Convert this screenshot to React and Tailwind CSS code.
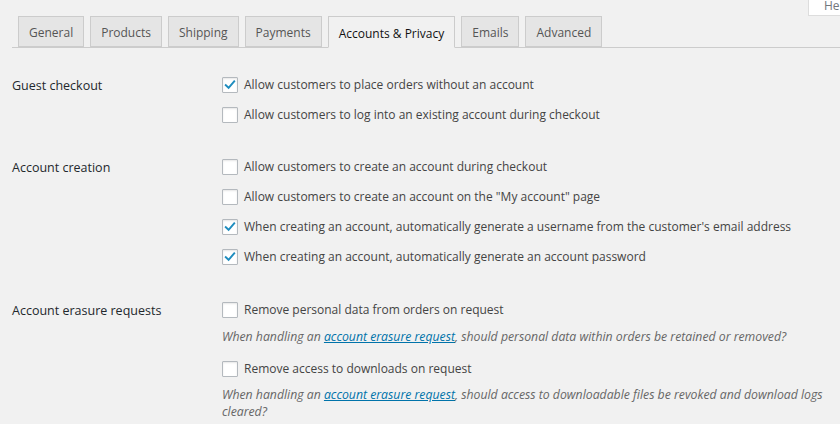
import React from 'react'

const font = { fontFamily: '"Open Sans", "Noto Sans", sans-serif' }

const tabs = ['General', 'Products', 'Shipping', 'Payments', 'Accounts & Privacy', 'Emails', 'Advanced']

function Checkbox({ checked }) {
    return (
        <span className="w-4 h-4 shrink-0 bg-white border border-[#b4b9be] rounded-[1px] shadow-[inset_0_1px_2px_rgba(0,0,0,0.1)] flex items-center justify-center">
            {checked && (
                <svg viewBox="0 0 16 16" className="w-[14px] h-[14px]">
                    <path d="M3.2 8.2 L6.4 11.2 L12.8 3.8" fill="none" stroke="#1e8cbe" strokeWidth="2.2" strokeLinecap="square" />
                </svg>
            )}
        </span>
    )
}

function Option({ checked, children, className = '' }) {
    return (
        <div className={`h-[30px] flex items-center gap-[6px] text-[12px] text-[#444] ${className}`}>
            <Checkbox checked={checked} />
            <span>{children}</span>
        </div>
    )
}

function Desc({ children, className = '' }) {
    return (
        <p className={`text-[12.25px] italic text-[#666] leading-[17px] ${className}`}>{children}</p>
    )
}

function Link({ children }) {
    return <a className="text-[#0073aa] underline">{children}</a>
}

function Section({ label, children, className = '' }) {
    return (
        <div className={`flex ${className}`}>
            <div className="w-[210px] shrink-0 h-[30px] pt-[3px] flex items-center text-[12.5px] font-medium text-[#23282d]">{label}</div>
            <div className="flex flex-col">{children}</div>
        </div>
    )
}

export default function App() {
    return (
        <div className="relative w-[840px] h-[424px] overflow-hidden bg-[#f1f1f1]" style={font}>
            {/* screen meta toggle */}
            <div className="absolute left-[808px] top-0 h-[16px] w-[60px] bg-white border-l border-b border-[#ddd] pl-[15px] text-[12px] leading-[12px] text-[#72777c]">
                Help
            </div>

            <div className="pt-4 pl-3">
                <nav className="flex gap-[6px] pl-[6px] border-b border-[#ccc] h-[32px]">
                    {tabs.map((t) => {
                        const active = t === 'Accounts & Privacy'
                        return (
                            <div
                                key={t}
                                className={
                                    active
                                        ? 'h-[32px] px-[10px] pt-[3px] flex items-center border border-[#ccc] border-b-[#f1f1f1] bg-[#f1f1f1] text-[12px] text-[#111]'
                                        : 'h-[31px] px-[10px] pt-[3px] flex items-center border border-[#ccc] bg-[#e5e5e5] text-[12px] text-[#555]'
                                }
                            >
                                {t}
                            </div>
                        )
                    })}
                </nav>
            </div>

            <div className="pl-3 pt-[22px]">
                <Section label="Guest checkout">
                    <Option checked>Allow customers to place orders without an account</Option>
                    <Option>Allow customers to log into an existing account during checkout</Option>
                </Section>

                <Section label="Account creation" className="mt-[22px]">
                    <Option>Allow customers to create an account during checkout</Option>
                    <Option>Allow customers to create an account on the "My account" page</Option>
                    <Option checked>When creating an account, automatically generate a username from the customer's email address</Option>
                    <Option checked>When creating an account, automatically generate an account password</Option>
                </Section>

                <Section label="Account erasure requests" className="mt-[23px]">
                    <Option>Remove personal data from orders on request</Option>
                    <Desc className="mt-[3px]">
                        When handling an <Link>account erasure request</Link>, should personal data within orders be retained or removed?
                    </Desc>
                    <Option className="mt-[9px]">Remove access to downloads on request</Option>
                    <Desc className="mt-[2px] w-[612px]">
                        When handling an <Link>account erasure request</Link>, should access to downloadable files be revoked and download logs cleared?
                    </Desc>
                </Section>
            </div>
        </div>
    )
}
